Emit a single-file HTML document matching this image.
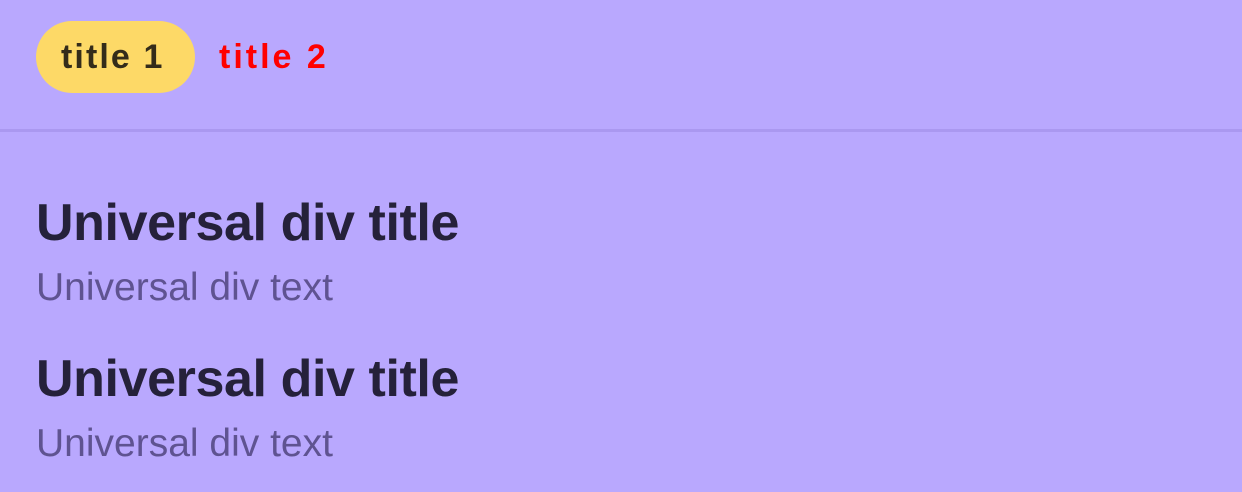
<!DOCTYPE html>
<html><head><style>
html,body{margin:0;padding:0}
body{width:1242px;height:492px;background:#b9a8fe;position:relative;overflow:hidden;font-family:"Liberation Sans",sans-serif}
.pill{position:absolute;left:36px;top:21px;width:159px;height:72px;border-radius:36px;background:#fdd967}
.t{position:absolute;font-size:34px;font-weight:bold;letter-spacing:2.1px;line-height:1}
.line{position:absolute;left:0;top:129px;width:1242px;height:3px;background:#aa98f0}
.h{position:absolute;left:36px;font-size:52px;font-weight:bold;color:#25213a;letter-spacing:-0.4px;line-height:1;white-space:nowrap}
.p{position:absolute;left:36px;font-size:39px;color:#5f5391;line-height:1;white-space:nowrap}
</style></head><body>
<div class="pill"></div>
<div class="t" style="left:61px;top:40px;color:#342c1a">title 1</div>
<div class="t" style="left:219px;top:40px;color:#ff0000;letter-spacing:3px">title 2</div>
<div class="line"></div>
<div class="h" style="top:197px">Universal div title</div>
<div class="p" style="top:268px">Universal div text</div>
<div class="h" style="top:353px">Universal div title</div>
<div class="p" style="top:424px">Universal div text</div>
</body></html>
